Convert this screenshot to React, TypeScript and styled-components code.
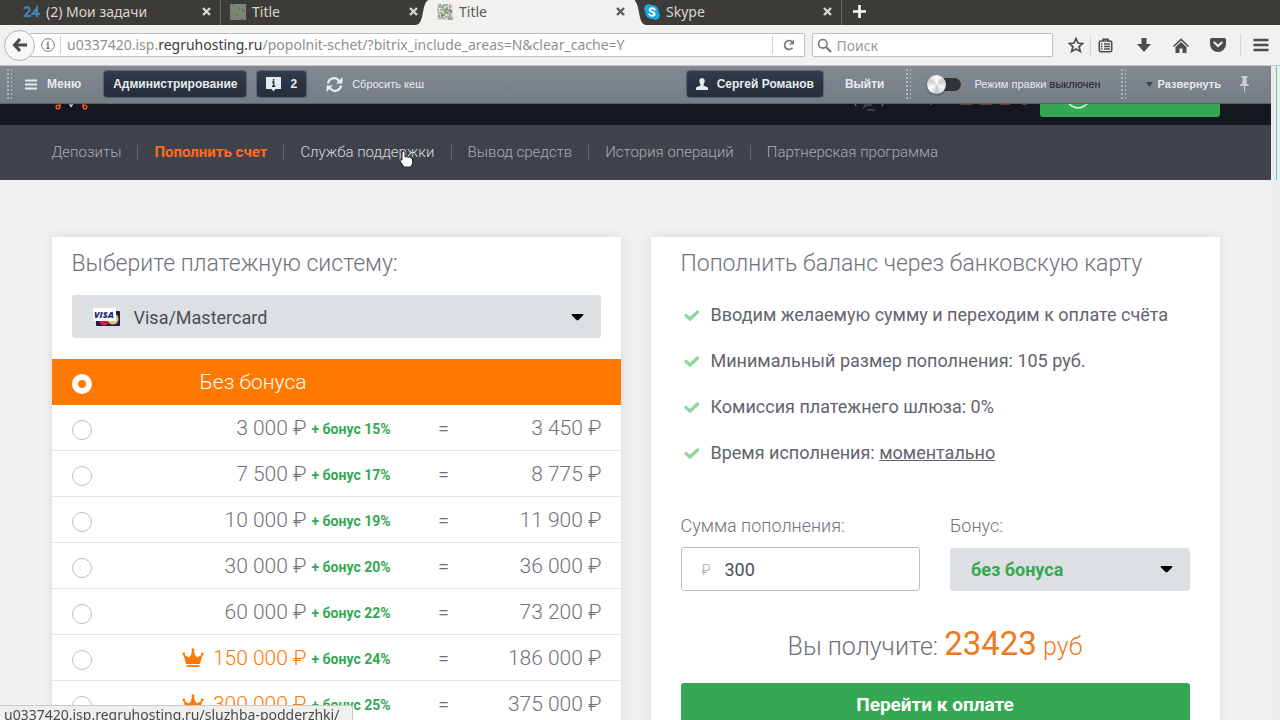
import React, { useState } from "react";
import styled, { createGlobalStyle } from "styled-components";

const GlobalStyle = createGlobalStyle`
  *, *::before, *::after { box-sizing: border-box; }
  body { margin: 0; background: #f0f0f0; font-family: Roboto, sans-serif; overflow: hidden; }
  button, input, select { font: inherit; }
`;

const Browser = styled.div`
  height: 100vh;
  display: flex;
  flex-direction: column;
  overflow: hidden;
`;

/* ---------- browser chrome ---------- */

const TabStrip = styled.div`
  flex: none;
  display: flex;
  height: 25px;
  padding-left: 14px;
  background: #3c3b37;
  font-family: "Noto Sans", sans-serif;
`;

const Tab = styled.div<{ $active?: boolean; $divider?: boolean }>`
  position: relative;
  flex: 0 1 207px;
  display: flex;
  align-items: center;
  gap: 6px;
  height: 25px;
  padding: 0 9px 2px 9px;
  font-size: 14px;
  color: ${(p) => (p.$active ? "#5a5a58" : "#d8d6d0")};
  background: ${(p) => (p.$active ? "#f2f1f0" : "transparent")};
  border-right: 1px solid ${(p) => (p.$divider ? "#6b6a66" : "transparent")};
`;

const TabCurve = styled.svg<{ $side: "left" | "right" }>`
  position: absolute;
  top: 0;
  ${(p) => (p.$side === "left" ? "left: -12px;" : "right: -12px; transform: scaleX(-1);")}
`;

const TabTitle = styled.span`
  flex: 1;
  white-space: nowrap;
  overflow: hidden;
`;

const PlainButton = styled.button`
  display: flex;
  align-items: center;
  justify-content: center;
  padding: 0;
  border: 0;
  background: none;
  color: inherit;
  cursor: pointer;
`;

const NewTab = styled(PlainButton)`
  width: 34px;
  height: 23px;
  color: #fff;
`;

const NavBar = styled.div`
  flex: none;
  display: flex;
  align-items: center;
  height: 41px;
  padding-left: 4px;
  background: #f2f1f0;
  border-bottom: 1px solid #c4c4c6;
  font-family: "Noto Sans", sans-serif;
  font-size: 14px;
  color: #8f8f8d;
`;

const BackButton = styled(PlainButton)`
  position: relative;
  z-index: 1;
  flex: none;
  width: 31px;
  height: 31px;
  border: 1px solid #b5b4b2;
  border-radius: 50%;
  background: #f8f8f7;
  color: #4a4a48;
`;

const Field = styled.div<{ $grow: string }>`
  flex: ${(p) => p.$grow};
  min-width: 0;
  display: flex;
  align-items: center;
  height: 24px;
  border: 1px solid #bfbebc;
  border-radius: 2px;
  background: #fff;
`;

const UrlField = styled(Field)`
  margin-left: -6px;
  padding-left: 11px;
`;

const SearchField = styled(Field)`
  margin-left: 7px;
  padding-left: 4px;
  gap: 4px;
`;

const Url = styled.div`
  flex: 1;
  margin-left: 5px;
  padding-left: 6px;
  border-left: 1px solid #cfcfcd;
  line-height: 18px;
  font-size: 14px;
  white-space: nowrap;
  overflow: hidden;
  b { font-weight: 400; color: #3a3a38; }
`;

const Reload = styled(PlainButton)`
  width: 32px;
  height: 18px;
  border-left: 1px solid #cfcfcd;
  color: #7c7c7a;
`;

const SearchInput = styled.input`
  flex: 1;
  min-width: 0;
  padding: 0;
  border: 0;
  outline: 0;
  background: none;
  &::placeholder { color: #9a9a98; opacity: 1; }
`;

const ToolIcons = styled.div`
  flex: none;
  display: grid;
  grid-template-columns: 30px 30px 46px 28px 46px 40px;
  margin-left: 7px;
  color: #4d4d4b;
`;

const Tool = styled(PlainButton)<{ $divided?: boolean }>`
  height: 22px;
  border-left: 1px solid ${(p) => (p.$divided ? "#d8d7d5" : "transparent")};
`;

/* ---------- page viewport ---------- */

const Viewport = styled.div`
  flex: 1;
  min-height: 0;
  display: flex;
`;

const Site = styled.div`
  flex: 1;
  min-width: 0;
  overflow: hidden;
`;

const ScrollTrack = styled.div`
  flex: none;
  width: 9px;
  padding-left: 5px;
  background: #ececec;
`;

const ScrollThumb = styled.div`
  width: 1px;
  height: 114px;
  background: #4fd0c4;
`;

/* ---------- administration panel ---------- */

const AdminBar = styled.div`
  display: flex;
  align-items: center;
  height: 38px;
  padding: 0 22px 1px 0;
  background: linear-gradient(#838992, #757c86);
  border-bottom: 1px solid #5d636c;
  font-family: "Liberation Sans", Arial, sans-serif;
  font-size: 12px;
  color: #e6ebf0;
`;

const Grip = styled.span`
  flex: none;
  width: 6px;
  height: 32px;
  background-image: radial-gradient(circle, #b0b5bd 1px, transparent 1px);
  background-size: 4px 4px;
`;

const AdminButton = styled(PlainButton)<{ $dark?: boolean; $bold?: boolean }>`
  flex: none;
  gap: 9px;
  height: 26px;
  padding: 0 ${(p) => (p.$dark ? "9px" : "0")};
  border-radius: 3px;
  background: ${(p) => (p.$dark ? "linear-gradient(#323b4b, #252c3a)" : "none")};
  box-shadow: ${(p) => (p.$dark ? "0 0 1px 1px #262d3966" : "none")};
  font-weight: ${(p) => (p.$bold ? 700 : 400)};
  white-space: nowrap;
`;

const AdminLeft = styled.div`
  flex: 1;
  display: flex;
  align-items: center;
  padding-left: 6px;
`;

const MenuButton = styled(AdminButton)`
  gap: 10px;
  margin: 0 23px 0 13px;
`;

const InfoButton = styled(AdminButton)`
  margin: 0 20px 0 11px;
`;

const ResetButton = styled(AdminButton)`
  font-size: 11px;
`;

const AdminRight = styled.div`
  display: flex;
  align-items: center;
`;

const Exit = styled.a`
  margin: 0 20px 0 22px;
  font-weight: 700;
  color: inherit;
  text-decoration: none;
`;

const SwitchLabel = styled.label`
  display: flex;
  align-items: center;
  gap: 14px;
  margin: 0 19px 0 16px;
  font-size: 11px;
  white-space: nowrap;
  b { font-weight: 400; color: #20242b; }
`;

const Switch = styled.input`
  appearance: none;
  display: flex;
  align-items: center;
  width: 34px;
  height: 13px;
  margin: 0;
  border-radius: 7px;
  background: #30343b;
  &::before {
    content: "";
    width: 19px;
    height: 19px;
    border-radius: 50%;
    background: conic-gradient(#fff, #cfcfcf, #f4f4f4, #c9c9c9, #fff, #cfcfcf, #fff);
    box-shadow: 0 1px 2px #0006;
  }
  &:checked { flex-direction: row-reverse; }
`;

const Expand = styled(AdminButton)`
  gap: 5px;
  margin: 0 19px 0 20px;
  font-size: 11px;
`;

/* ---------- site header ---------- */

const Header = styled.header`
  height: 21px;
  overflow: hidden;
  background: #141720;
`;

const Container = styled.div`
  max-width: 1168px;
  margin: 0 auto;
`;

const HeaderRow = styled(Container)`
  display: flex;
  align-items: flex-start;
  justify-content: space-between;
`;

const HeaderAccount = styled.div`
  display: flex;
  align-items: flex-start;
  gap: 10px;
`;

const TopUp = styled.button`
  display: flex;
  width: 180px;
  height: 13px;
  padding: 0 28px;
  border: 0;
  border-radius: 0 0 3px 3px;
  background: #34a853;
`;

const SiteNav = styled.nav`
  height: 55px;
  background: #40424b;
`;

const NavList = styled(Container)`
  display: flex;
  align-items: center;
  height: 55px;
`;

const NavLink = styled.a<{ $state?: "active" | "hover" }>`
  padding-right: 16px;
  margin-right: 16px;
  border-right: 1px solid #656770;
  font-size: 15px;
  line-height: 15px;
  white-space: nowrap;
  text-decoration: none;
  font-weight: ${(p) => (p.$state === "active" ? 700 : 300)};
  color: ${(p) => (p.$state === "active" ? "#ff6a1f" : p.$state === "hover" ? "#d8d9dc" : "#a9abb1")};
  &:last-child { border: 0; }
`;

const Cursor = styled.svg`
  position: absolute;
  left: 398px;
  top: 150px;
`;

/* ---------- payment cards ---------- */

const Columns = styled(Container)`
  display: grid;
  grid-template-columns: 1fr 1fr;
  gap: 30px;
  padding-top: 57px;
`;

const Card = styled.section`
  min-width: 0;
  background: #fff;
  box-shadow: 0 0 10px #0000001a;
`;

const SystemCard = styled(Card)`
  padding-top: 10px;
`;

const PayCard = styled(Card)`
  padding: 10px 30px 30px;
`;

const Title = styled.h2<{ $inset?: boolean }>`
  margin: 0 ${(p) => (p.$inset ? "20px" : "0")};
  font-size: 23px;
  line-height: 34px;
  font-weight: 300;
  color: #70727b;
  white-space: nowrap;
`;

const SelectBox = styled.div`
  display: flex;
  align-items: center;
  height: 43px;
  padding: 1px 17px 0 21px;
  border-radius: 3px;
  background: #dde0e3;
  color: #000;
`;

const SystemSelect = styled(SelectBox)`
  margin: 14px 20px 21px;
  gap: 14px;
`;

const Select = styled.select<{ $green?: boolean }>`
  appearance: none;
  flex: 1;
  min-width: 0;
  padding: 0;
  border: 0;
  outline: 0;
  background: none;
  font-size: 18px;
  font-weight: ${(p) => (p.$green ? 700 : 400)};
  color: ${(p) => (p.$green ? "#34a853" : "#4b4d55")};
`;

const Bonuses = styled.div``;

const BonusRow = styled.label<{ $selected: boolean }>`
  display: grid;
  grid-template-columns: 20px 215fr 127fr 20px 148fr;
  align-items: center;
  height: 46px;
  padding: 0 19px 0 20px;
  border-bottom: 1px solid ${(p) => (p.$selected ? "#ff7800" : "#e3e3e5")};
  background: ${(p) => (p.$selected ? "#ff7800" : "#fff")};
  color: ${(p) => (p.$selected ? "#fff" : "#70727b")};
  font-size: 21px;
  font-weight: 300;
  white-space: nowrap;
  cursor: pointer;
`;

const Radio = styled.input`
  appearance: none;
  width: 20px;
  height: 20px;
  margin: 4px 0 0;
  border: 1px solid #bfbfc2;
  border-radius: 50%;
  background: #fff;
  &:checked { border: 6px solid #fff; background: #ff7800; }
`;

const Amount = styled.span<{ $vip?: boolean }>`
  display: flex;
  align-items: center;
  justify-content: flex-end;
  gap: 9px;
  color: ${(p) => (p.$vip ? "#ff7800" : "inherit")};
`;

const Bonus = styled.span`
  padding: 3px 0 0 5px;
  font-size: 14px;
  font-weight: 700;
  color: #34a853;
`;

const Equals = styled.span`
  text-align: center;
  font-size: 20px;
`;

const Total = styled.span`
  text-align: right;
`;

const Facts = styled.ul`
  display: grid;
  gap: 22px;
  margin: 22px 0 0;
  padding: 0;
  list-style: none;
`;

const Fact = styled.li`
  display: flex;
  align-items: center;
  gap: 11px;
  padding-left: 2px;
  font-size: 18px;
  line-height: 24px;
  color: #62646e;
  white-space: nowrap;
`;

const Form = styled.div`
  display: grid;
  grid-template-columns: 1fr 1fr;
  gap: 30px;
  margin-top: 49px;
`;

const FormField = styled.label`
  display: grid;
  grid-template-columns: minmax(0, 1fr);
  gap: 9px;
  min-width: 0;
  font-size: 18px;
  line-height: 24px;
  font-weight: 300;
  color: #70727b;
`;

const SumBox = styled.div`
  display: flex;
  align-items: center;
  gap: 14px;
  height: 44px;
  padding: 1px 20px 0;
  border: 1px solid #bcbdc1;
  border-radius: 3px;
  font-size: 14px;
  color: #a3a4a8;
`;

const SumInput = styled.input`
  flex: 1;
  min-width: 0;
  padding: 0;
  border: 0;
  outline: 0;
  font-size: 18px;
  font-weight: 400;
  color: #4b4d55;
`;

const Receive = styled.p`
  margin: 31px 0 14px;
  text-align: center;
  font-size: 25px;
  line-height: 44px;
  font-weight: 300;
  color: #70727b;
  span { color: #f07820; }
`;

const Sum = styled.span`
  font-size: 33px;
  font-weight: 400;
`;

const PayButton = styled.button`
  width: 100%;
  height: 43px;
  padding: 0;
  border: 0;
  border-radius: 3px;
  background: #34a853;
  color: #fff;
  font-size: 19px;
  font-weight: 700;
`;

const StatusLink = styled.div`
  position: fixed;
  left: 0;
  bottom: 0;
  min-width: 353px;
  height: 15px;
  padding: 0 4px;
  overflow: hidden;
  border: 1px solid #c9c9c9;
  border-width: 1px 1px 0 0;
  border-radius: 0 3px 0 0;
  background: #efefee;
  font-family: "Noto Sans", sans-serif;
  font-size: 14px;
  line-height: 18px;
  color: #4a4a48;
`;

/* ---------- icons ---------- */

const Close = () => (
  <svg width="9" height="9" viewBox="0 0 9 9"><path d="M1 1l7 7M8 1l-7 7" stroke="currentColor" strokeWidth="2.4" /></svg>
);

const SiteFavicon = () => (
  <svg width="16" height="16" viewBox="0 0 16 16" fill="none" strokeWidth="1.2">
    <rect width="16" height="16" fill="#c3c7bb" opacity=".5" />
    <path d="M1 3h4l2-2h4M3 6h5v4M10 3v4h4M1 9h4v5M8 13h5v-3" stroke="#5f9a68" />
    <path d="M13 1v3M0 6h2M6 3v2M10 9h5M2 14h2M15 13v3M8 7l3 3M4 11l3 4" stroke="#a5757a" />
    <path d="M2 1h2M8 5h2M5 11h3M11 15h3M2 11v2M12 5l3 3" stroke="#5b6368" />
  </svg>
);

const BitrixFavicon = () => (
  <svg width="17" height="16" viewBox="0 0 17 16" fill="none" stroke="#3f86b5" strokeWidth="2.2">
    <path d="M1 5C2 2.500 7 3 6.500 6 6.300 8 3 10 2 12h6M14 13V4L9.500 10H17" />
  </svg>
);

const SkypeFavicon = () => (
  <svg width="16" height="16" viewBox="0 0 16 16">
    <circle cx="8" cy="8" r="7" fill="#1ba8e8" /><circle cx="4.500" cy="4.500" r="4.300" fill="#1ba8e8" /><circle cx="11.500" cy="11.500" r="4.300" fill="#1ba8e8" />
    <path d="M10.800 5.600C10 3.700 5.600 3.800 5.700 6c.1 2.200 5 1.500 5 4 0 2.300-4.700 2.300-5.500.2" fill="none" stroke="#fff" strokeWidth="1.800" strokeLinecap="round" />
  </svg>
);

const TabEdge = ({ side }: { side: "left" | "right" }) => (
  <TabCurve $side={side} width="13" height="25" viewBox="0 0 13 25">
    <path d="M0 25C9 24 5 2 13 0V25Z" fill="#f2f1f0" />
  </TabCurve>
);

const Caret = () => (
  <svg width="13" height="7" viewBox="0 0 13 7"><path d="M1 0h11q1 .5 0 1.500L7.500 6q-1 .9-2 0L1 1.500Q0 .5 1 0Z" fill="#000" /></svg>
);

const Check = () => (
  <svg width="17" height="13" viewBox="0 0 17 13"><path d="M3 6.500L7 10l7.500-7" fill="none" stroke="#8fd6a0" strokeWidth="3.400" strokeLinecap="round" /></svg>
);

const Crown = () => (
  <svg width="22" height="20" viewBox="0 0 22 20" fill="#ff7800">
    <path d="M4 16L1.500 6.500 7 9.500Q9.500 7 10.300 2.500h1.400Q12.500 7 15 9.500l5.500-3L18 16Z" />
    <path d="M4.500 17.200h13v1.800h-13Z" />
    <circle cx="11" cy="1.800" r="1.500" /><circle cx="1.800" cy="6" r="1.400" /><circle cx="20.200" cy="6" r="1.400" />
  </svg>
);

const VisaCard = () => (
  <svg width="27" height="20" viewBox="0 0 27 20">
    <rect x="3" y="4" width="24" height="15" rx="1" fill="#1c1d55" />
    <circle cx="11" cy="14" r="4.500" fill="#d5203a" /><circle cx="20" cy="12" r="5.500" fill="#eec06a" />
    <rect x="0" y="1" width="23" height="13" rx="1" fill="#fff" />
    <text x="1" y="11" fontFamily="Open Sans" fontSize="9" fontWeight="800" fontStyle="italic" fill="#20296f">VISA</text>
  </svg>
);

const rows = [
  { amount: "3 000", bonus: 15, total: "3 450" },
  { amount: "7 500", bonus: 17, total: "8 775" },
  { amount: "10 000", bonus: 19, total: "11 900" },
  { amount: "30 000", bonus: 20, total: "36 000" },
  { amount: "60 000", bonus: 22, total: "73 200" },
  { amount: "150 000", bonus: 24, total: "186 000", vip: true },
  { amount: "300 000", bonus: 25, total: "375 000", vip: true },
];

export default function App() {
  const [selected, setSelected] = useState(0);
  return (
    <Browser>
      <GlobalStyle />
      <TabStrip>
        <Tab $divider><BitrixFavicon /><TabTitle>(2) Мои задачи</TabTitle><PlainButton aria-label="Закрыть"><Close /></PlainButton></Tab>
        <Tab><SiteFavicon /><TabTitle>Title</TabTitle><PlainButton aria-label="Закрыть"><Close /></PlainButton></Tab>
        <Tab $active><TabEdge side="left" /><TabEdge side="right" /><SiteFavicon /><TabTitle>Title</TabTitle><PlainButton aria-label="Закрыть"><Close /></PlainButton></Tab>
        <Tab $divider><SkypeFavicon /><TabTitle>Skype</TabTitle><PlainButton aria-label="Закрыть"><Close /></PlainButton></Tab>
        <NewTab aria-label="Новая вкладка"><svg width="13" height="13" viewBox="0 0 13 13"><path d="M6.500 0v13M0 6.500h13" stroke="currentColor" strokeWidth="2.600" /></svg></NewTab>
      </TabStrip>

      <NavBar>
        <BackButton aria-label="Назад">
          <svg width="15" height="14" viewBox="0 0 15 14" fill="none" stroke="currentColor" strokeWidth="3"><path d="M8 1L2.500 7 8 13M3 7h12" /></svg>
        </BackButton>
        <UrlField $grow="781">
          <svg width="14" height="14" viewBox="0 0 14 14" fill="none" stroke="#777"><circle cx="7" cy="7" r="6.300" /><path d="M5.500 6H7v4M5.300 10.300h3.400M7 3.200v1.500" strokeWidth="1.400" /></svg>
          <Url>u0337420.isp.<b>regruhosting.ru</b>/popolnit-schet/?bitrix_include_areas=N&amp;clear_cache=Y</Url>
          <Reload aria-label="Обновить">
            <svg width="12" height="12" viewBox="0 0 12 12" fill="none" stroke="currentColor" strokeWidth="1.800"><path d="M9.500 8.800A4.400 4.400 0 1 1 9 2.800" /><path d="M11 .5v5H6Z" fill="currentColor" stroke="none" /></svg>
          </Reload>
        </UrlField>
        <SearchField $grow="240">
          <svg width="15" height="15" viewBox="0 0 15 15" fill="none" stroke="#777"><circle cx="5.800" cy="5.800" r="4.300" strokeWidth="1.600" /><path d="M9 9l5 5" strokeWidth="2.200" /></svg>
          <SearchInput aria-label="Поиск" placeholder="Поиск" />
        </SearchField>
        <ToolIcons>
          <Tool aria-label="Закладка"><svg width="16" height="16" viewBox="0 0 16 16" fill="none" stroke="currentColor" strokeWidth="1.700"><path d="M8 1.500l2 4.500 4.800.4-3.700 3.200 1.200 4.800L8 11.900l-4.300 2.500 1.200-4.800L1.200 6.400 6 6Z" /></svg></Tool>
          <Tool $divided aria-label="Список закладок"><svg width="15" height="15" viewBox="0 0 15 15" fill="none" stroke="currentColor" strokeWidth="1.600"><rect x="1.300" y="3" width="12.400" height="10.700" rx="1.500" /><path d="M5 3V1.200h5V3M3 6h1.500M3 8.500h1.500M3 11h1.500M6 6h6M6 8.500h6M6 11h6" /></svg></Tool>
          <Tool aria-label="Загрузки"><svg width="14" height="14" viewBox="0 0 14 14" fill="currentColor"><path d="M4.500 0h5v6H14L7 14 0 6h4.500Z" /></svg></Tool>
          <Tool aria-label="Домой"><svg width="16" height="15" viewBox="0 0 16 15" fill="currentColor"><path d="M8 .3L16 8l-1 1-7-6.500L1 9 0 8Z" /><path d="M8 4l5.500 5v6h-4v-4.500h-3V15h-4V9Z" /></svg></Tool>
          <Tool aria-label="Pocket"><svg width="16" height="14" viewBox="0 0 16 14"><path d="M1.500 0h13Q16 0 16 1.500V6a8 8 0 0 1-16 0V1.500Q0 0 1.500 0Z" fill="currentColor" /><path d="M4.300 4.500L8 8l3.700-3.500" fill="none" stroke="#f2f1f0" strokeWidth="2" strokeLinecap="round" /></svg></Tool>
          <Tool $divided aria-label="Меню браузера"><svg width="16" height="14" viewBox="0 0 16 14"><path d="M.5 2h15M.5 7h15M.5 12h15" stroke="currentColor" strokeWidth="2.600" /></svg></Tool>
        </ToolIcons>
      </NavBar>

      <Viewport>
        <Site>
          <AdminBar>
            <AdminLeft>
              <Grip />
              <MenuButton $bold><svg width="12" height="11" viewBox="0 0 12 11"><path d="M0 1.500h12M0 5.500h12M0 9.500h12" stroke="currentColor" strokeWidth="1.800" /></svg>Меню</MenuButton>
              <AdminButton $dark $bold>Администрирование</AdminButton>
              <InfoButton $dark $bold>
                <svg width="15" height="15" viewBox="0 0 15 15"><path d="M0 0h15v12H9.500L7.500 14.500 5.500 12H0Z" fill="currentColor" /><path d="M6 5h1.700v4M6 9.300h3.400M7.600 2v1.700" fill="none" stroke="#2b3342" strokeWidth="1.500" /></svg>2
              </InfoButton>
              <ResetButton>
                <svg width="17" height="17" viewBox="0 0 17 17" fill="none" stroke="currentColor" strokeWidth="2.200"><path d="M2 7.500A6 6 0 0 1 13 5M15 9.500A6 6 0 0 1 4 12" /><path d="M16.500 1v6.500H10ZM.5 16V9.500H7Z" fill="currentColor" stroke="none" /></svg>
                Сбросить кеш
              </ResetButton>
            </AdminLeft>
            <AdminRight>
              <AdminButton $dark $bold>
                <svg width="12" height="12" viewBox="0 0 12 12" fill="currentColor"><path d="M3.300 2.800C3.300-.8 8.700-.8 8.700 2.800 8.700 4.800 7.500 6 7.500 7.500L12 9.500V12H0V9.500L4.500 7.500C4.500 6 3.300 4.800 3.300 2.800Z" /></svg>Сергей Романов
              </AdminButton>
              <Exit href="#">Выйти</Exit>
              <Grip />
              <SwitchLabel><Switch type="checkbox" /><span>Режим правки <b>выключен</b></span></SwitchLabel>
              <Grip />
              <Expand $bold><svg width="7" height="5" viewBox="0 0 7 5"><path d="M0 0h7L3.500 5Z" fill="#3f454e" /></svg>Развернуть</Expand>
              <PlainButton aria-label="Закрепить"><svg width="9" height="17" viewBox="0 0 9 17" fill="#c9ced5"><path d="M1.500 0h6v1.500L6.500 2v5L9 9v1H5.200L4.700 17h-.5L3.800 10H0V9l2.500-2V2l-1-.5Z" /></svg></PlainButton>
            </AdminRight>
          </AdminBar>

          <Header>
            <HeaderRow>
              <svg width="40" height="8" viewBox="0 0 40 8" fill="none">
                <circle cx="6" cy="3" r="1.800" stroke="#e8562a" strokeWidth="1.500" /><circle cx="33" cy="3" r="1.800" stroke="#e8562a" strokeWidth="1.500" />
                <path d="M8 0v3M31 0v3" stroke="#e8562a" strokeWidth="1.500" />
                <path d="M17.500 0l1.500 2.500L20.500 0" stroke="#d5d7da" strokeWidth="1.300" />
              </svg>
              <HeaderAccount>
                <svg width="180" height="8" viewBox="0 0 180 8" fill="none">
                  <path d="M5 0l1 2M33 0l-1 2" stroke="#6a6c72" strokeWidth="1.500" /><path d="M14 1h8M13 4l3-2M17 6h8" stroke="#3c3f47" strokeWidth="2" />
                  <path d="M81 0v1M110 0h12M130 0h12M150 0h10M172 0h5" stroke="#6e3c28" strokeWidth="2" />
                </svg>
                <TopUp aria-label="Пополнить"><svg width="20" height="6" viewBox="0 0 20 6"><path d="M1 0q9 8 18 0" fill="none" stroke="#d9efdf" strokeWidth="1.500" /></svg></TopUp>
              </HeaderAccount>
            </HeaderRow>
          </Header>

          <SiteNav>
            <NavList>
              <NavLink href="#">Депозиты</NavLink>
              <NavLink href="#" $state="active">Пополнить счет</NavLink>
              <NavLink href="#" $state="hover">Служба поддержки</NavLink>
              <NavLink href="#">Вывод средств</NavLink>
              <NavLink href="#">История операций</NavLink>
              <NavLink href="#">Партнерская программа</NavLink>
            </NavList>
          </SiteNav>

          <Columns>
            <SystemCard>
              <Title $inset>Выберите платежную систему:</Title>
              <SystemSelect>
                <VisaCard />
                <Select aria-label="Платежная система"><option>Visa/Mastercard</option></Select>
                <Caret />
              </SystemSelect>
              <Bonuses role="radiogroup" aria-label="Бонус">
                <BonusRow $selected={selected === 0}>
                  <Radio type="radio" name="bonus" checked={selected === 0} onChange={() => setSelected(0)} />
                  <Amount>Без бонуса</Amount>
                </BonusRow>
                {rows.map((r, i) => (
                  <BonusRow key={r.amount} $selected={selected === i + 1}>
                    <Radio type="radio" name="bonus" checked={selected === i + 1} onChange={() => setSelected(i + 1)} />
                    <Amount $vip={r.vip}>{r.vip && <Crown />}{r.amount} ₽</Amount>
                    <Bonus>+ бонус {r.bonus}%</Bonus>
                    <Equals>=</Equals>
                    <Total>{r.total} ₽</Total>
                  </BonusRow>
                ))}
              </Bonuses>
            </SystemCard>

            <PayCard>
              <Title>Пополнить баланс через банковскую карту</Title>
              <Facts>
                <Fact><Check />Вводим желаемую сумму и переходим к оплате счёта</Fact>
                <Fact><Check />Минимальный размер пополнения: 105 руб.</Fact>
                <Fact><Check />Комиссия платежнего шлюза: 0%</Fact>
                <Fact><Check /><span>Время исполнения: <u>моментально</u></span></Fact>
              </Facts>
              <Form>
                <FormField>
                  Сумма пополнения:
                  <SumBox>₽<SumInput defaultValue="300" /></SumBox>
                </FormField>
                <FormField>
                  Бонус:
                  <SelectBox><Select $green><option>без бонуса</option></Select><Caret /></SelectBox>
                </FormField>
              </Form>
              <Receive>Вы получите: <Sum>23423</Sum> <span>руб</span></Receive>
              <PayButton>Перейти к оплате</PayButton>
            </PayCard>
          </Columns>
        </Site>
        <ScrollTrack><ScrollThumb /></ScrollTrack>
      </Viewport>

      <Cursor width="16" height="18" viewBox="0 0 16 18">
        <path d="M4 2q1.500-2 3 0v5l1.500-.5 1.500.8 1.500-.3 1.500 1 1.500.5v5l-1.500 3.500H6L2 11q-.5-2 2-1Z" fill="#fff" stroke="#222" />
      </Cursor>
      <StatusLink>u0337420.isp.regruhosting.ru/sluzhba-podderzhki/</StatusLink>
    </Browser>
  );
}
